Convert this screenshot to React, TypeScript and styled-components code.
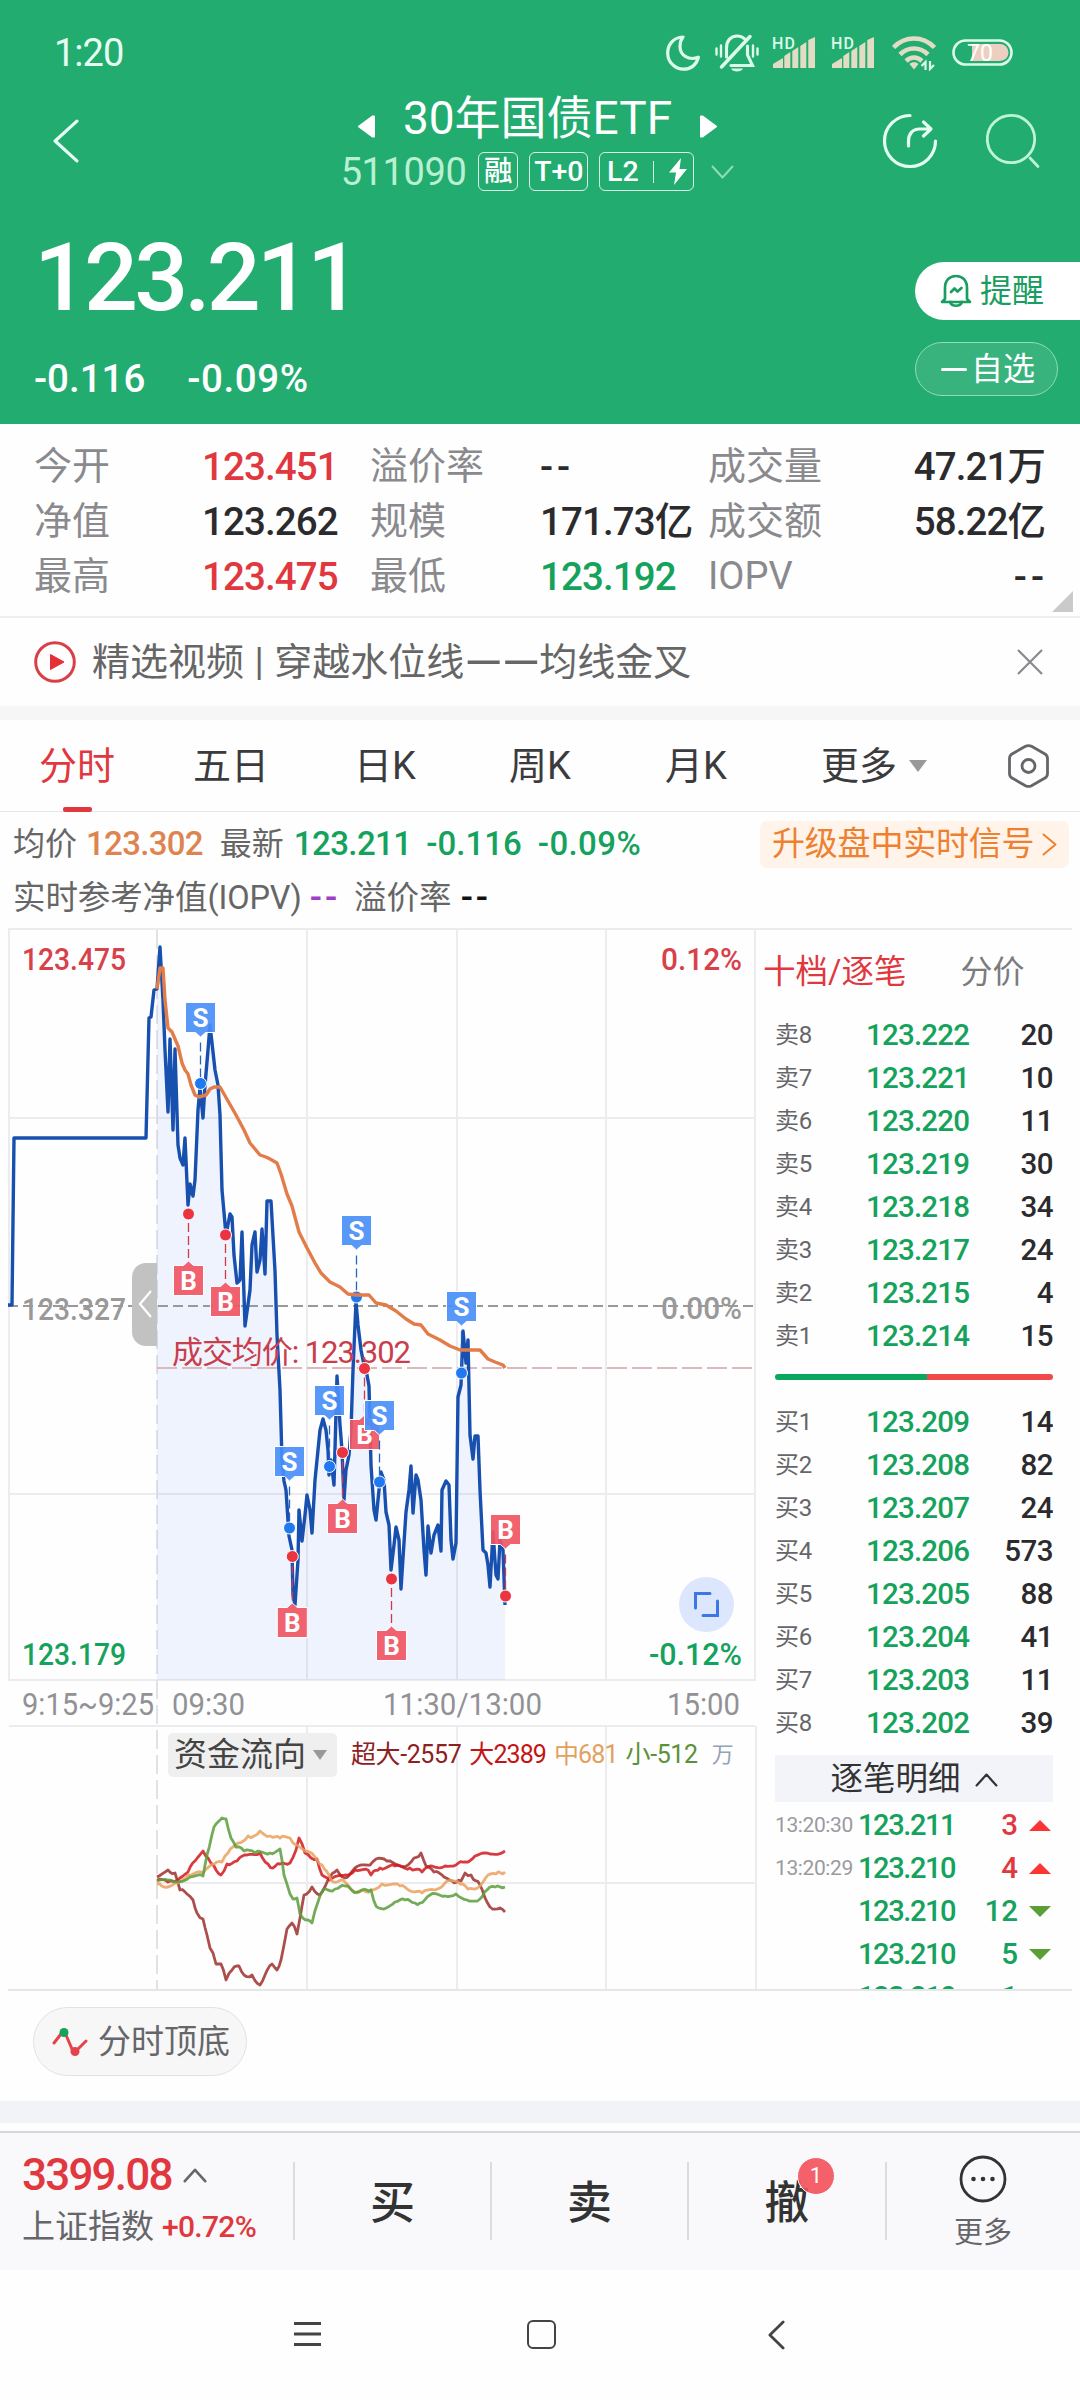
import React from "react";
import styled, { createGlobalStyle } from "styled-components";

const RED = "#e0383e";
const GREEN = "#15a25c";
const HEADER = "#22ac6f";

const GlobalStyle = createGlobalStyle`
  * { box-sizing: border-box; }
  body {
    margin: 0;
    background: #fefefe;
    font-family: Roboto, "Noto Sans CJK SC", sans-serif;
    color: #2b2b2e;
  }
  svg { display: block; flex: none; }
`;

const Page = styled.div`
  width: 1080px;
  height: 2400px;
  display: flex;
  flex-direction: column;
  overflow: hidden;
  background: #fefefe;
`;

const Txt = styled.span<{ $s: number; $c?: string; $w?: number; $ls?: number; $ml?: number }>`
  font-size: ${(p) => p.$s}px;
  line-height: ${(p) => Math.round(p.$s * 1.2)}px;
  color: ${(p) => p.$c ?? "inherit"};
  font-weight: ${(p) => p.$w ?? 400};
  letter-spacing: ${(p) => p.$ls ?? 0}px;
  margin-left: ${(p) => p.$ml ?? 0}px;
  white-space: nowrap;
`;

/* ---------- header ---------- */

const Header = styled.header`
  height: 424px;
  flex: none;
  background: ${HEADER};
  color: #fff;
  display: flex;
  flex-direction: column;
`;

const StatusBar = styled.div`
  height: 88px;
  flex: none;
  padding: 17px 66px 0 54px;
  display: flex;
  align-items: center;
  justify-content: space-between;
`;

const StatusIcons = styled.div`
  display: flex;
  align-items: center;
  gap: 15px;
`;

const TitleBar = styled.div`
  height: 105px;
  flex: none;
  padding: 0 40px 0 53px;
  display: flex;
  align-items: center;
  justify-content: space-between;
`;

const TitleStack = styled.div`
  width: 400px;
  margin-left: 114px;
  padding-top: 4px;
  display: flex;
  flex-direction: column;
  align-items: center;
`;

const TitleLine = styled.div`
  height: 57px;
  display: flex;
  align-items: center;
  gap: 28px;
`;

const CodeLine = styled.div`
  height: 48px;
  padding-top: 1px;
  display: flex;
  align-items: center;
`;

const Badge = styled.span<{ $w: number; $ml: number }>`
  width: ${(p) => p.$w}px;
  height: 39px;
  margin-left: ${(p) => p.$ml}px;
  border: 1.5px solid #d6f5e6;
  border-radius: 6px;
  display: flex;
  align-items: center;
  justify-content: center;
  font-size: 28.5px;
  font-weight: 500;
  line-height: 36px;
`;

const BadgeRule = styled.i`
  width: 1px;
  height: 22px;
  margin: 0 15px 0 14px;
  background: #d6f5e6;
`;

const TitleActions = styled.div`
  display: flex;
  gap: 48px;
`;

const Hero = styled.div`
  flex: 1;
  min-height: 0;
  display: flex;
  justify-content: space-between;
`;

const PriceBlock = styled.div`
  padding: 28px 0 0 34px;
  display: flex;
  flex-direction: column;
`;

const BigPrice = styled.div`
  height: 110px;
  flex: none;
  line-height: 113px;
  font-size: 95px;
  font-weight: 500;
  letter-spacing: -3.9px;
`;

const ChangeRow = styled.div`
  height: 93px;
  padding-top: 3px;
  flex: none;
  display: flex;
  align-items: center;
  gap: 42px;
`;

const HeroButtons = styled.div`
  width: 165px;
  padding-top: 69px;
  display: flex;
  flex-direction: column;
  gap: 22px;
`;

const AlertButton = styled.div`
  height: 58px;
  flex: none;
  padding-left: 25px;
  border-radius: 29px 0 0 29px;
  background: #fff;
  color: #1a9d60;
  display: flex;
  align-items: center;
  gap: 8px;
`;

const WatchButton = styled.div`
  width: 143px;
  height: 54px;
  flex: none;
  padding-left: 25px;
  border: 1px solid #8fdcb5;
  border-radius: 28px;
  background: #38b37d;
  display: flex;
  align-items: center;
  gap: 4px;
`;

const Minus = styled.i`
  width: 26px;
  height: 3px;
  border-radius: 2px;
  background: #fff;
`;

/* ---------- quote stats ---------- */

const Stats = styled.section`
  height: 194px;
  padding: 15px 7px 0 34px;
  border-bottom: 2px solid #efefef;
  display: flex;
`;

const StatGrid = styled.div`
  flex: 1;
  display: grid;
  grid-template-columns: 168px 168px 170px 168px 170px 167px;
  grid-template-rows: repeat(3, 55px);
  align-items: center;
`;

const StatCell = styled.div<{ $c?: string; $right?: boolean; $dash?: boolean }>`
  font-size: 38.5px;
  font-weight: 500;
  line-height: 55px;
  white-space: nowrap;
  letter-spacing: ${(p) => (p.$dash ? 4 : -0.9)}px;
  margin-right: ${(p) => (p.$dash ? -3 : 0)}px;
  color: ${(p) => p.$c ?? "#2b2b2e"};
  text-align: ${(p) => (p.$right ? "right" : "left")};
`;

const StatLabel = styled(StatCell)`
  color: #8a8a8e;
  font-size: 38px;
  font-weight: 400;
  letter-spacing: 0;
`;

const Corner = styled.i`
  align-self: flex-end;
  margin: 0 0 4px -21px;
  border-left: 21px solid transparent;
  border-bottom: 21px solid #cacaca;
`;

const VideoRow = styled.section`
  height: 88px;
  padding: 0 37px 0 34px;
  display: flex;
  align-items: center;
  color: #666;
`;

const VideoTitle = styled.span`
  margin-left: 16px;
  font-size: 38px;
  line-height: 56px;
  word-spacing: 1px;
  white-space: nowrap;
`;

const Dash = styled.span`
  display: inline-block;
  width: 37.5px;
  font-size: 49px;
  line-height: 40px;
  vertical-align: -4px;
  text-align: center;
`;

const Push = styled.i`
  flex: 1;
`;

const Band = styled.div<{ $h: number; $c: string }>`
  height: ${(p) => p.$h}px;
  background: ${(p) => p.$c};
  flex: none;
`;

/* ---------- tabs ---------- */

const Tabs = styled.nav`
  height: 92px;
  padding-left: 39px;
  border-bottom: 1px solid #e6e6e6;
  display: grid;
  grid-template-columns: 154px 161px 155px 156px 156px 187px 41px;
  color: #3b3b3d;
`;

const Tab = styled.div<{ $active?: boolean }>`
  position: relative;
  height: 92px;
  display: flex;
  align-items: center;
  gap: 12px;
  font-size: 38px;
  line-height: 60px;
  color: ${(p) => (p.$active ? RED : "inherit")};
  &::after {
    content: "";
    display: ${(p) => (p.$active ? "block" : "none")};
    position: absolute;
    left: 24px;
    bottom: 0;
    width: 29px;
    height: 5px;
    border-radius: 2px;
    background: ${RED};
  }
`;

const Caret = styled.i<{ $w: number; $h: number }>`
  border: ${(p) => p.$w / 2}px solid transparent;
  border-top: ${(p) => p.$h}px solid #999;
  border-bottom: 0;
`;

const InfoRows = styled.section`
  height: 116px;
  padding: 5px 11px 0 13px;
  display: flex;
  flex-direction: column;
`;

const InfoRow = styled.div<{ $h: number }>`
  height: ${(p) => p.$h}px;
  display: flex;
  align-items: center;
  color: #666;
`;

const UpgradeTag = styled.div`
  width: 309px;
  height: 47px;
  padding: 0 12px;
  border-radius: 7px;
  background: #fff3ea;
  color: #ee8130;
  display: flex;
  align-items: center;
  justify-content: space-between;
  font-size: 33px;
  line-height: 40px;
  letter-spacing: -0.2px;
`;

/* ---------- chart and book ---------- */

const Market = styled.section`
  height: 1063px;
  margin: 0 8px;
  border-top: 2px solid #ebebeb;
  border-bottom: 2px solid #e6e6e6;
  display: flex;
`;

const ChartPane = styled.div`
  position: relative;
  width: 775px;
  margin-left: -8px;
`;

const FlowLegend = styled.div`
  position: absolute;
  left: 168px;
  top: 803px;
  height: 44px;
  display: flex;
  align-items: center;
`;

const FlowSelect = styled.div`
  width: 169px;
  height: 44px;
  padding-left: 6px;
  margin-right: 14px;
  border-radius: 5px;
  background: #efefef;
  color: #444;
  display: flex;
  align-items: center;
  gap: 7px;
`;

const Book = styled.aside`
  width: 278px;
  display: flex;
  flex-direction: column;
`;

const BookTabs = styled.div`
  height: 84px;
  margin-left: -12px;
  display: flex;
  align-items: center;
  gap: 54px;
  color: #7b7b7e;
  white-space: nowrap;
`;

const BookRow = styled.div`
  height: 43px;
  flex: none;
  display: grid;
  grid-template-columns: 91px 110px 1fr;
  align-items: center;
  line-height: 43px;
`;

const Level = styled.span`
  font-size: 24px;
  letter-spacing: -0.3px;
  color: #66666a;
`;

const BookPrice = styled.span`
  font-size: 29.5px;
  font-weight: 500;
  letter-spacing: -0.8px;
  color: ${GREEN};
`;

const Qty = styled.span`
  font-size: 29.5px;
  font-weight: 500;
  letter-spacing: -0.5px;
  text-align: right;
`;

const Ratio = styled.div`
  height: 6px;
  margin: 16px 0 21px;
  border-radius: 3px;
  flex: none;
  background: linear-gradient(to right, #0aa85f 0 152px, #f0494b 152px);
`;

const BuyList = styled.div`
  height: 354px;
  flex: none;
  overflow: hidden;
`;

const TickHead = styled.div`
  height: 47px;
  padding-top: 2px;
  flex: none;
  background: #f3f4f9;
  color: #333;
  display: flex;
  align-items: center;
  justify-content: center;
  gap: 14px;
`;

const TickList = styled.div`
  flex: 1;
  padding-top: 2px;
  overflow: hidden;
`;

const TickRow = styled.div`
  height: 43px;
  display: grid;
  grid-template-columns: 83px 100px 60px 1fr;
  align-items: center;
  line-height: 43px;
`;

const TickTime = styled.span`
  font-size: 21px;
  letter-spacing: -0.4px;
  color: #9a9a9e;
`;

const TickPrice = styled.span`
  font-size: 29px;
  font-weight: 500;
  letter-spacing: -1.4px;
  color: ${GREEN};
`;

const TickQty = styled.span<{ $up: boolean }>`
  font-size: 29.5px;
  font-weight: 500;
  text-align: right;
  color: ${(p) => (p.$up ? RED : GREEN)};
`;

const Arrow = styled.i<{ $up: boolean }>`
  justify-self: end;
  margin-right: 2px;
  border: 11.5px solid transparent;
  border-${(p) => (p.$up ? "bottom" : "top")}: 11.5px solid ${(p) => (p.$up ? "#fb3434" : "#5b9e38")};
  border-${(p) => (p.$up ? "top" : "bottom")}: 0;
`;

/* ---------- footer ---------- */

const ToolRow = styled.section`
  height: 110px;
  padding: 16px 33px 0;
`;

const Pill = styled.div`
  width: 214px;
  height: 69px;
  padding-left: 18px;
  border: 1px solid #e2e2e2;
  border-radius: 35px;
  background: #f7f7f7;
  color: #66666a;
  display: flex;
  align-items: center;
  gap: 10px;
`;

const TradeBar = styled.section`
  height: 139px;
  margin-top: 8px;
  border-top: 2px solid #d6d6d8;
  background: #f9f9fb;
  display: grid;
  grid-template-columns: 293px 197px 197px 198px 1fr;
`;

const IndexCell = styled.div`
  padding: 17px 0 0 22px;
`;

const IndexLine = styled.div<{ $h: number }>`
  height: ${(p) => p.$h}px;
  display: flex;
  align-items: center;
  color: #66666a;
`;

const TradeCell = styled.div`
  position: relative;
  height: 78px;
  margin-top: 29px;
  padding-bottom: 4px;
  border-left: 2px solid #dcdcde;
  display: flex;
  align-items: center;
  justify-content: center;
  font-size: 45px;
  font-weight: 500;
  color: #333;
`;

const CountBadge = styled.span`
  position: absolute;
  left: 108px;
  top: -5px;
  width: 38px;
  height: 38px;
  border: 1px solid #fff;
  border-radius: 50%;
  background: rgba(244, 80, 90, 0.9);
  color: #fff;
  font-size: 22px;
  font-weight: 400;
  line-height: 36px;
  text-align: center;
`;

const MoreCell = styled(TradeCell)`
  flex-direction: column;
  gap: 13px;
  padding: 3px 1px 0 0;
`;

const SystemNav = styled.nav`
  flex: 1;
  padding: 50px 295px 0 294px;
  display: flex;
  justify-content: space-between;
  align-items: flex-start;
`;

const HomeKey = styled.i`
  width: 29px;
  height: 29px;
  margin-right: 7px;
  border: 2.8px solid #444;
  border-radius: 6px;
`;

/* ---------- icons ---------- */

const Moon = () => (
  <svg width="34" height="36" viewBox="0 0 34 36" fill="none" stroke="#dcfbea" strokeWidth="3.2" strokeLinejoin="round">
    <path d="M17 2C6.500 2.500 1.700 10.500 1.700 18c0 9 7 16.200 16 16.200 7 0 13-4.200 14.700-12C23 26 14 20.500 14 11.500 14 7.500 15 4.500 17 2z" />
  </svg>
);

const Bell = () => (
  <svg width="44" height="38" viewBox="0 0 44 38" fill="none" stroke="#dcfbea" strokeWidth="3.1" strokeLinecap="round">
    <path d="M11.500 23V14c0-7 4-12 10.500-12 3 0 5.500 1 7.300 2.700M32.500 12v9l5 10.500H16" />
    <path d="M6.500 33L35 2.500" strokeWidth="3.500" />
    <path d="M1.500 14.500v6M6 11.500v11M38 11.500v11M42.500 14.500v6" strokeWidth="2.400" />
    <path d="M16 34.500h12c-1.500 4-10.500 4-12 0z" fill="#dcfbea" stroke="none" />
  </svg>
);

const SignalSvg = styled.svg`
  margin-left: -2px;
  margin-right: 2px;
  overflow: visible;
`;

const Signal = () => (
  <SignalSvg width="44" height="34" viewBox="0 0 44 34">
    <g fill="#e2dcc4">
      <path d="M1 32v-4l10-6v10zM12.300 32V20l6-4v16zM20.300 32V15l6-4v21zM28.300 32V10l6-4v26zM36.300 32V4l6.700-3v31z" />
    </g>
    <text x="0" y="13" fontSize="16" fontWeight="500" fill="#dcfbea" textLength="23">HD</text>
  </SignalSvg>
);

const Wifi = () => (
  <svg width="45" height="36" viewBox="0 0 45 36" fill="none" stroke="#e2dcc4" strokeWidth="4.600">
    <path d="M1.500 12.500C13 .5 31 .5 42.500 12.500" />
    <path d="M8 19.500c8-8 20-8 28 0" />
    <path d="M14 26c5-4.500 11-4.500 16 0" />
    <path d="M17.500 29c2-2.500 7-2.500 9 0l-4.500 5.500z" fill="#e2dcc4" stroke="none" />
    <path d="M33.500 35v-8l-4 4M38 26v8l4-4" stroke="#dcfbea" strokeWidth="2.200" />
  </svg>
);

const Battery = () => (
  <svg width="62" height="27" viewBox="0 0 62 27">
    <rect x="1.500" y="1.500" width="58" height="24" rx="12" fill="none" stroke="#dcfbea" strokeWidth="2.600" />
    <path d="M20 5h28a8.500 8.500 0 0 1 0 17H20z" fill="#edcfc1" />
    <text x="15" y="21.500" fontSize="23" fill="#fff" textLength="26">70</text>
  </svg>
);

const Chevron = ({ w, h, dir, c, sw = 2.5 }: { w: number; h: number; dir: "l" | "r" | "u" | "d"; c: string; sw?: number }) => {
  const p = sw / 2 + 0.5;
  const pts = {
    l: `${w - p},${p} ${p},${h / 2} ${w - p},${h - p}`,
    r: `${p},${p} ${w - p},${h / 2} ${p},${h - p}`,
    u: `${p},${h - p} ${w / 2},${p} ${w - p},${h - p}`,
    d: `${p},${p} ${w / 2},${h - p} ${w - p},${p}`,
  }[dir];
  return (
    <svg width={w} height={h} fill="none" stroke={c} strokeWidth={sw} strokeLinecap="round" strokeLinejoin="round">
      <polyline points={pts} />
    </svg>
  );
};

const ArrowSvg = styled.svg`
  margin-top: 15px;
`;

const TitleArrow = ({ flip }: { flip?: boolean }) => (
  <ArrowSvg width="17" height="23" viewBox="0 0 17 23" fill="#fff" stroke="#fff" strokeWidth="2" strokeLinejoin="round">
    <path d={flip ? "M1 1.500h1.500L16 11.500 2.500 21.500H1z" : "M16 1.500h-1.500L1 11.500l13.500 10H16z"} />
  </ArrowSvg>
);

const Share = () => (
  <svg width="56" height="56" viewBox="0 0 56 56" fill="none" stroke="#e6fff3" strokeWidth="3.200" strokeLinecap="round" strokeLinejoin="round">
    <path d="M28 2.500A25.500 25.500 0 1 0 53.500 28" />
    <path d="M26.500 33v-5c0-7 4-12 11-12h11M41.500 9l7.500 7-7.500 7" />
  </svg>
);

const Search = () => (
  <svg width="54" height="56" viewBox="0 0 54 56" fill="none" stroke="#bff3d8" strokeWidth="2.800" strokeLinecap="round">
    <circle cx="25" cy="26" r="23.700" />
    <path d="M44 45l8 8.500" />
  </svg>
);

const BellChart = () => (
  <svg width="32" height="34" viewBox="0 0 32 34" fill="none" stroke="#1a9d60" strokeWidth="2.700" strokeLinecap="round" strokeLinejoin="round">
    <path d="M5 25V14C5 6.500 9.500 2 16 2s11 4.500 11 12v11l3 3H2z" />
    <path d="M10 28c2 5 10 5 12 0M11 18l3.500-3.500 3 3L21.500 14" />
  </svg>
);

const Bolt = () => (
  <svg width="18" height="27" viewBox="0 0 18 27" fill="#fff">
    <path d="M12 0L0 14.500h7L5 27 18 11h-7.500z" />
  </svg>
);

const Play = () => (
  <svg width="42" height="44" viewBox="0 0 42 44">
    <circle cx="21" cy="22" r="19.300" fill="none" stroke="#da3f47" strokeWidth="3" />
    <path d="M16.500 14.500L30 22l-13.500 7.500z" fill="#e52f38" stroke="#e52f38" strokeLinejoin="round" />
  </svg>
);

const Close = () => (
  <svg width="26" height="26" viewBox="0 0 26 26" stroke="#8a8a8e" strokeWidth="2.200">
    <path d="M1 1l24 24M25 1L1 25" />
  </svg>
);

const Hexagon = () => (
  <svg width="41" height="44" viewBox="0 0 41 44" fill="none" stroke="#66666a" strokeWidth="2.800" strokeLinejoin="round">
    <path d="M17.500 2.300q3-1.500 6 0L37 10q2.500 1.500 2.500 4.500v15q0 3-2.500 4.500l-13.500 7.700q-3 1.500-6 0L4 34q-2.500-1.500-2.500-4.500v-15Q1.500 11.500 4 10z" />
    <circle cx="20.500" cy="22" r="6.500" />
  </svg>
);

const PeakIcon = () => (
  <svg width="36" height="32" viewBox="0 0 36 32" fill="none" stroke="#e5434b" strokeWidth="3" strokeLinecap="round">
    <path d="M2 17l7-9 5 1 6 14 4 2 10-10" />
    <circle cx="12" cy="6.500" r="4.500" fill="#15a25c" stroke="none" />
    <circle cx="23" cy="25.500" r="4.500" fill="#e5434b" stroke="none" />
  </svg>
);

const Dots = () => (
  <svg width="48" height="48" viewBox="0 0 48 48" fill="#333">
    <circle cx="24" cy="24" r="22" fill="none" stroke="#333" strokeWidth="2.800" />
    <circle cx="14.500" cy="24" r="2.300" />
    <circle cx="24" cy="24" r="2.300" />
    <circle cx="33.500" cy="24" r="2.300" />
  </svg>
);

/* ---------- chart data ---------- */

const price =
  "8,1305 12,1305 14,1138 146,1138 149,1018 151,1017 154,990 157,989 160,947 163,1000 165,1050 168,1112 170,1039 173,1130 175,1049 178,1145 180,1158 183,1165 185,1138 188,1205 190,1184 193,1196 195,1180 198,1110 200,1088 203,1118 205,1085 208,1050 210,1025 213,1052 215,1070 218,1085 220,1115 222,1190 226,1235 230,1214 232,1217 234,1255 237,1283 240,1280 242,1232 245,1326 250,1290 252,1245 255,1232 257,1272 260,1260 262,1229 265,1274 267,1201 271,1201 275,1271 277,1335 280,1390 282,1460 284,1481 286,1490 289,1536 292,1550 293,1595 295,1605 298,1560 299,1510 302,1541 305,1515 307,1495 310,1510 312,1533 315,1480 318,1450 320,1430 323,1419 326,1430 328,1450 329,1475 331,1460 334,1485 337,1376 340,1425 342,1450 344,1500 346,1470 349,1455 351,1430 353,1370 356,1302 358,1325 361,1350 364,1365 367,1375 369,1386 371,1465 374,1510 376,1520 379,1490 381,1472 384,1480 386,1512 389,1525 391,1570 394,1545 396,1527 399,1540 401,1589 406,1512 409,1490 411,1466 413,1513 416,1475 418,1480 421,1500 424,1550 426,1575 428,1526 431,1553 434,1535 438,1525 441,1551 442,1490 446,1481 449,1485 451,1540 453,1559 456,1543 458,1397 461,1385 463,1331 466,1363 468,1340 470,1435 473,1459 475,1436 478,1436 480,1490 483,1550 486,1553 488,1565 490,1587 493,1532 496,1575 498,1579 500,1540 503,1550 505,1605";

const fill = "157,1680 157,989 " + price.slice(price.indexOf("160,947")) + " 505,1680";

const average =
  "157,989 160,968 163,968 165,1000 168,1028 172,1032 178,1046 182,1063 185,1070 188,1074 191,1085 195,1095 199,1097 206,1095 210,1089 214,1087 220,1087 228,1101 236,1115 244,1130 250,1143 260,1155 266,1157 270,1159 277,1163 281,1174 287,1194 292,1206 299,1232 307,1248 315,1263 321,1273 330,1282 340,1287 348,1294 356,1295 369,1295 376,1303 386,1305 396,1311 406,1319 414,1324 421,1325 428,1334 440,1340 450,1346 460,1350 480,1350 488,1359 495,1362 503,1365 505,1368";

const flows: { color: string; pts: number[][] }[] = [
  {
    color: "#9e2f2b",
    pts: [[157,1877],[168,1870],[175,1873],[180,1890],[187,1894],[193,1900],[197,1913],[203,1919],[207,1935],[210,1948],[213,1953],[216,1964],[221,1964],[226,1980],[232,1970],[239,1966],[244,1975],[252,1975],[260,1985],[265,1975],[272,1964],[277,1970],[281,1960],[284,1945],[287,1929],[292,1923],[297,1934],[300,1918],[304,1895],[312,1887],[320,1895],[328,1880],[337,1870],[345,1878],[355,1868],[370,1865],[376,1859],[387,1861],[400,1866],[408,1865],[414,1858],[421,1853],[426,1866],[434,1872],[444,1877],[452,1881],[461,1881],[465,1873],[471,1875],[480,1885],[487,1902],[490,1907],[500,1908],[505,1912]],
  },
  {
    color: "#d0191d",
    pts: [[157,1880],[168,1882],[180,1878],[188,1872],[195,1861],[203,1851],[208,1858],[214,1866],[221,1875],[227,1864],[237,1861],[247,1855],[260,1853],[268,1864],[273,1868],[280,1864],[290,1863],[296,1850],[299,1838],[305,1853],[311,1858],[317,1859],[322,1875],[330,1880],[345,1875],[355,1870],[368,1870],[371,1875],[380,1868],[395,1866],[410,1868],[422,1872],[430,1866],[445,1866],[456,1865],[465,1862],[475,1856],[490,1854],[505,1851]],
  },
  {
    color: "#eaa15e",
    pts: [[157,1884],[164,1887],[175,1883],[188,1875],[203,1873],[214,1864],[222,1862],[228,1853],[238,1843],[248,1836],[254,1836],[260,1831],[270,1836],[280,1838],[290,1838],[297,1845],[305,1851],[315,1857],[322,1865],[331,1880],[345,1882],[357,1893],[371,1890],[382,1884],[400,1886],[422,1893],[435,1890],[447,1881],[460,1884],[468,1889],[480,1886],[488,1875],[496,1874],[505,1872]],
  },
  {
    color: "#5b9e3c",
    pts: [[157,1881],[175,1882],[190,1877],[203,1876],[207,1855],[214,1827],[218,1822],[222,1818],[226,1819],[231,1838],[236,1847],[244,1851],[255,1853],[270,1853],[280,1849],[284,1875],[290,1894],[293,1899],[297,1898],[300,1914],[308,1920],[312,1923],[318,1902],[323,1890],[335,1889],[345,1886],[357,1892],[371,1890],[376,1906],[384,1909],[395,1902],[405,1900],[415,1903],[420,1903],[430,1895],[445,1896],[456,1894],[467,1900],[480,1899],[487,1890],[495,1887],[505,1887]],
  },
];

// Minute-by-minute wobble between the recorded turning points.
const wobble = (pts: number[][], seed: number) => {
  const out: string[] = [];
  for (let i = 0; i < pts.length - 1; i++) {
    const [x0, y0] = pts[i];
    const [x1, y1] = pts[i + 1];
    const n = Math.max(1, Math.round((x1 - x0) / 2.5));
    for (let k = 0; k < n; k++) {
      const x = x0 + ((x1 - x0) * k) / n;
      const j = k === 0 ? 0 : Math.sin(x * 2.3 + seed) * 1.8;
      out.push(`${x.toFixed(1)},${(y0 + ((y1 - y0) * k) / n + j).toFixed(1)}`);
    }
  }
  const last = pts[pts.length - 1];
  out.push(`${last[0]},${last[1]}`);
  return out.join(" ");
};

type Mark = { t: "S" | "B"; x: number; y: number; dot: number };
const marks: Mark[] = [
  { t: "B", x: 188.5, y: 1265.5, dot: 1214 },
  { t: "B", x: 225.5, y: 1286.5, dot: 1235 },
  { t: "B", x: 292.3, y: 1607.5, dot: 1556.5 },
  { t: "B", x: 342.5, y: 1503.5, dot: 1452.5 },
  { t: "B", x: 364.5, y: 1419.5, dot: 1368.5 },
  { t: "B", x: 391.5, y: 1630.5, dot: 1579 },
  { t: "B", x: 505.5, y: 1514.5, dot: 1596 },
  { t: "S", x: 200.5, y: 1002.5, dot: 1083.5 },
  { t: "S", x: 356.5, y: 1215.5, dot: 1297 },
  { t: "S", x: 289.5, y: 1446.5, dot: 1528 },
  { t: "S", x: 329.5, y: 1385.5, dot: 1466.5 },
  { t: "S", x: 379.5, y: 1400.5, dot: 1482 },
  { t: "S", x: 461.5, y: 1291.5, dot: 1373 },
];

const Marker = ({ t, x, y, dot }: Mark) => {
  const down = dot > y;
  const c = t === "S" ? "#4a8ff9" : "#f05663";
  const lineTop = down ? y + 40 : dot + 9;
  const lineEnd = down ? dot - 6 : y - 6;
  const tip = down
    ? `M${x - 15} ${y}h30v30h-10l-5 4.500l-5 -4.500h-10z`
    : `M${x - 15} ${y}h10l5 -4.500l5 4.500h10v30h-30z`;
  return (
    <g>
      <path d={`M${x} ${lineTop}V${lineEnd}`} stroke={t === "S" ? "#2465c4" : "#d33a48"} strokeWidth="1.300" strokeDasharray="9 4" />
      <circle cx={x} cy={dot} r="6" fill={t === "S" ? "#2179f2" : "#ea3440"} stroke="#fff" strokeWidth="1" />
      <path d={tip} fill={c} fillOpacity="0.92" stroke="#fff" strokeWidth="1" />
      <text x={x} y={y + 24} fontSize="26" fontWeight="700" textAnchor="middle" fill="#fff">{t}</text>
    </g>
  );
};

const Label = ({ x, y, w, c, thin, children }: { x: number; y: number; w: number; c: string; thin?: boolean; children: string }) => (
  <text x={x} y={y} textLength={w} lengthAdjust="spacingAndGlyphs" fontSize="30.500" fontWeight={thin ? 400 : 500} fill={c}>{children}</text>
);

const Chart = () => (
  <svg width="767" height="1059" viewBox="0 930 767 1059">
    <g stroke="#ececee" strokeWidth="2" fill="none">
      <path d="M9 930V1680H755V930M9 1118H755M9 1494H755" />
      <path d="M307 930V1680M457 930V1680M606 930V1680" />
      <path d="M307 1726V1990M457 1726V1990M606 1726V1990M756 1726V1990M9 1726H755M157 1883H755" />
      <path d="M157 930V1990" strokeDasharray="19 6" stroke="#e2e2e6" />
    </g>
    <polygon points={fill} fill="#3c78f0" fillOpacity="0.08" />
    <Label x={22} y={1320} w={104} c="#999">123.327</Label>
    <Label x={661} y={1319} w={81} c="#999">0.00%</Label>
    <path d="M8 1306H755" stroke="#999" strokeWidth="2" strokeDasharray="10 5" />
    <path d="M157 1368H755" stroke="#dcb7bb" strokeWidth="2" strokeDasharray="20 5" />
    <polyline points={price} fill="none" stroke="#1850b0" strokeWidth="3.400" strokeLinejoin="round" />
    <text x="172" y="1363" fontSize="31" fill="#ca3d4c" textLength="239">成交均价: 123.302</text>
    {marks.map((m) => (
      <Marker key={`${m.x}-${m.y}`} {...m} />
    ))}
    <polyline points={average} fill="none" stroke="#e27d49" strokeWidth="3.400" strokeLinejoin="round" />
    <path d="M157 1263h-11a14 14 0 0 0-14 14v55a14 14 0 0 0 14 14h11z" fill="#c2c2c2" />
    <path d="M151 1291l-11 13 11 13" fill="none" stroke="#fff" strokeWidth="2.200" />
    <Label x={22} y={970} w={104} c="#d8404a">123.475</Label>
    <Label x={661} y={970} w={81} c="#d8404a">0.12%</Label>
    <Label x={22} y={1665} w={104} c={GREEN}>123.179</Label>
    <Label x={649} y={1665} w={93} c={GREEN}>-0.12%</Label>
    <circle cx="706.500" cy="1604.500" r="27.500" fill="#dce7fd" />
    <path d="M710 1593.500H695.500V1608M703 1615.500H717.500V1601" fill="none" stroke="#3d77e6" strokeWidth="3" strokeLinecap="round" />
    <Label thin x={22} y={1715} w={132} c="#929296">9:15~9:25</Label>
    <Label thin x={172} y={1715} w={73} c="#929296">09:30</Label>
    <Label thin x={383} y={1715} w={159} c="#929296">11:30/13:00</Label>
    <Label thin x={667} y={1715} w={73} c="#929296">15:00</Label>
    {flows.map((f, i) => (
      <polyline key={f.color} points={wobble(f.pts, i)} fill="none" stroke={f.color} strokeOpacity="0.85" strokeWidth="2.800" strokeLinejoin="round" />
    ))}
  </svg>
);

/* ---------- page data ---------- */

const stats: [string, string, string?][] = [
  ["今开", "123.451", RED],
  ["溢价率", "--"],
  ["成交量", "47.21万"],
  ["净值", "123.262"],
  ["规模", "171.73亿"],
  ["成交额", "58.22亿"],
  ["最高", "123.475", RED],
  ["最低", "123.192", GREEN],
  ["IOPV", "--"],
];

const sells: [string, string, string][] = [
  ["卖8", "123.222", "20"],
  ["卖7", "123.221", "10"],
  ["卖6", "123.220", "11"],
  ["卖5", "123.219", "30"],
  ["卖4", "123.218", "34"],
  ["卖3", "123.217", "24"],
  ["卖2", "123.215", "4"],
  ["卖1", "123.214", "15"],
];

const buys: [string, string, string][] = [
  ["买1", "123.209", "14"],
  ["买2", "123.208", "82"],
  ["买3", "123.207", "24"],
  ["买4", "123.206", "573"],
  ["买5", "123.205", "88"],
  ["买6", "123.204", "41"],
  ["买7", "123.203", "11"],
  ["买8", "123.202", "39"],
  ["买9", "123.201", "107"],
];

const ticks: [string, string, string, boolean][] = [
  ["13:20:30", "123.211", "3", true],
  ["13:20:29", "123.210", "4", true],
  ["", "123.210", "12", false],
  ["", "123.210", "5", false],
  ["", "123.210", "1", false],
];

const Rows = ({ rows }: { rows: [string, string, string][] }) => (
  <>
    {rows.map(([l, p, q]) => (
      <BookRow key={l}>
        <Level>{l}</Level>
        <BookPrice>{p}</BookPrice>
        <Qty>{q}</Qty>
      </BookRow>
    ))}
  </>
);

export default function App() {
  return (
    <Page>
      <GlobalStyle />
      <Header>
        <StatusBar>
          <Txt $s={38} $c="#e6fff3" $ls={-1}>1:20</Txt>
          <StatusIcons>
            <Moon />
            <Bell />
            <Signal />
            <Signal />
            <Wifi />
            <Battery />
          </StatusIcons>
        </StatusBar>
        <TitleBar>
          <Chevron w={26} h={44} dir="l" c="#e6fff3" sw={3.2} />
          <TitleStack>
            <TitleLine>
              <TitleArrow />
              <Txt $s={46} $ls={0}>30年国债ETF</Txt>
              <TitleArrow flip />
            </TitleLine>
            <CodeLine>
              <Txt $s={38} $c="#b9f0d3" $ls={-0.4}>511090</Txt>
              <Badge $w={40} $ml={12}>融</Badge>
              <Badge $w={59} $ml={11}>T+0</Badge>
              <Badge $w={95} $ml={11}>
                L2
                <BadgeRule />
                <Bolt />
              </Badge>
              <Txt $s={10} $ml={17}>
                <Chevron w={23} h={14} dir="d" c="#8fdcb5" sw={2} />
              </Txt>
            </CodeLine>
          </TitleStack>
          <TitleActions>
            <Share />
            <Search />
          </TitleActions>
        </TitleBar>
        <Hero>
          <PriceBlock>
            <BigPrice>123.211</BigPrice>
            <ChangeRow>
              <Txt $s={38.5} $w={500} $ls={0}>-0.116</Txt>
              <Txt $s={38.5} $w={500} $ls={0.6}>-0.09%</Txt>
            </ChangeRow>
          </PriceBlock>
          <HeroButtons>
            <AlertButton>
              <BellChart />
              <Txt $s={32}>提醒</Txt>
            </AlertButton>
            <WatchButton>
              <Minus />
              <Txt $s={32}>自选</Txt>
            </WatchButton>
          </HeroButtons>
        </Hero>
      </Header>

      <Stats>
        <StatGrid>
          {stats.map(([label, value, color], i) => (
            <React.Fragment key={label}>
              <StatLabel>{label}</StatLabel>
              <StatCell $c={color} $right={i % 3 === 2} $dash={value === "--"}>{value}</StatCell>
            </React.Fragment>
          ))}
        </StatGrid>
        <Corner />
      </Stats>

      <VideoRow>
        <Play />
        <VideoTitle>
          精选视频 | 穿越水位线<Dash>—</Dash><Dash>—</Dash>均线金叉
        </VideoTitle>
        <Push />
        <Close />
      </VideoRow>
      <Band $h={14} $c="#f6f6f6" />

      <Tabs>
        <Tab $active>分时</Tab>
        <Tab>五日</Tab>
        <Tab>日K</Tab>
        <Tab>周K</Tab>
        <Tab>月K</Tab>
        <Tab>
          更多
          <Caret $w={19} $h={12} />
        </Tab>
        <Tab>
          <Hexagon />
        </Tab>
      </Tabs>

      <InfoRows>
        <InfoRow $h={54}>
          <Txt $s={32}>均价</Txt>
          <Txt $s={33} $w={500} $c="#dd8450" $ml={9} $ls={-0.7}>123.302</Txt>
          <Txt $s={32} $ml={17}>最新</Txt>
          <Txt $s={33} $w={500} $c={GREEN} $ml={10} $ls={-0.6}>123.211</Txt>
          <Txt $s={33} $w={500} $c={GREEN} $ml={15}>-0.116</Txt>
          <Txt $s={33} $w={500} $c={GREEN} $ml={16} $ls={0.4}>-0.09%</Txt>
          <Push />
          <UpgradeTag>
            升级盘中实时信号
            <Chevron w={15} h={23} dir="r" c="#ee8130" sw={2} />
          </UpgradeTag>
        </InfoRow>
        <InfoRow $h={54}>
          <Txt $s={32.5} $ls={-0.1}>实时参考净值(IOPV)</Txt>
          <Txt $s={36} $w={500} $c="#a03fc4" $ml={8} $ls={3}>--</Txt>
          <Txt $s={32.5} $ml={14}>溢价率</Txt>
          <Txt $s={36} $w={500} $c="#111" $ml={9} $ls={3}>--</Txt>
        </InfoRow>
      </InfoRows>

      <Market>
        <ChartPane>
          <Chart />
          <FlowLegend>
            <FlowSelect>
              <Txt $s={33}>资金流向</Txt>
              <Caret $w={15} $h={10} />
            </FlowSelect>
            <Txt $s={25} $c="#8d211e" $ls={-0.4}>超大-2557</Txt>
            <Txt $s={25} $c="#c31517" $ml={8} $ls={-0.9}>大2389</Txt>
            <Txt $s={25} $c="#e2a160" $ml={8} $ls={-0.9}>中681</Txt>
            <Txt $s={25} $c="#5b9138" $ml={8} $ls={-0.4}>小-512</Txt>
            <Txt $s={22} $c="#95a2b3" $ml={14}>万</Txt>
          </FlowLegend>
        </ChartPane>
        <Book>
          <BookTabs>
            <Txt $s={32.5} $c={RED} $ls={0}>十档/逐笔</Txt>
            <Txt $s={32}>分价</Txt>
          </BookTabs>
          <Rows rows={sells} />
          <Ratio />
          <BuyList>
            <Rows rows={buys} />
          </BuyList>
          <TickHead>
            <Txt $s={32.5}>逐笔明细</Txt>
            <Chevron w={23} h={14} dir="u" c="#333" sw={2.2} />
          </TickHead>
          <TickList>
            {ticks.map(([time, p, q, up], i) => (
              <TickRow key={i}>
                <TickTime>{time}</TickTime>
                <TickPrice>{p}</TickPrice>
                <TickQty $up={up}>{q}</TickQty>
                <Arrow $up={up} />
              </TickRow>
            ))}
          </TickList>
        </Book>
      </Market>

      <ToolRow>
        <Pill>
          <PeakIcon />
          <Txt $s={33}>分时顶底</Txt>
        </Pill>
      </ToolRow>
      <Band $h={22} $c="#f2f3f8" />

      <TradeBar>
        <IndexCell>
          <IndexLine $h={50}>
            <Txt $s={44} $c={RED} $w={500} $ls={-1.8}>3399.08</Txt>
            <Txt $s={10} $ml={11}>
              <Chevron w={24} h={15} dir="u" c="#66666a" sw={2.6} />
            </Txt>
          </IndexLine>
          <IndexLine $h={54}>
            <Txt $s={33}>上证指数</Txt>
            <Txt $s={30} $c={RED} $w={500} $ml={8} $ls={-0.7}>+0.72%</Txt>
          </IndexLine>
        </IndexCell>
        <TradeCell>买</TradeCell>
        <TradeCell>卖</TradeCell>
        <TradeCell>
          撤
          <CountBadge>1</CountBadge>
        </TradeCell>
        <MoreCell>
          <Dots />
          <Txt $s={29} $c="#66666a">更多</Txt>
        </MoreCell>
      </TradeBar>

      <SystemNav>
        <svg width="28" height="28" viewBox="0 0 28 28" stroke="#444" strokeWidth="3">
          <path d="M0 3.500h27M0 14h27M0 24.500h27" />
        </svg>
        <HomeKey />
        <Chevron w={17} h={30} dir="l" c="#444" sw={2.8} />
      </SystemNav>
    </Page>
  );
}
